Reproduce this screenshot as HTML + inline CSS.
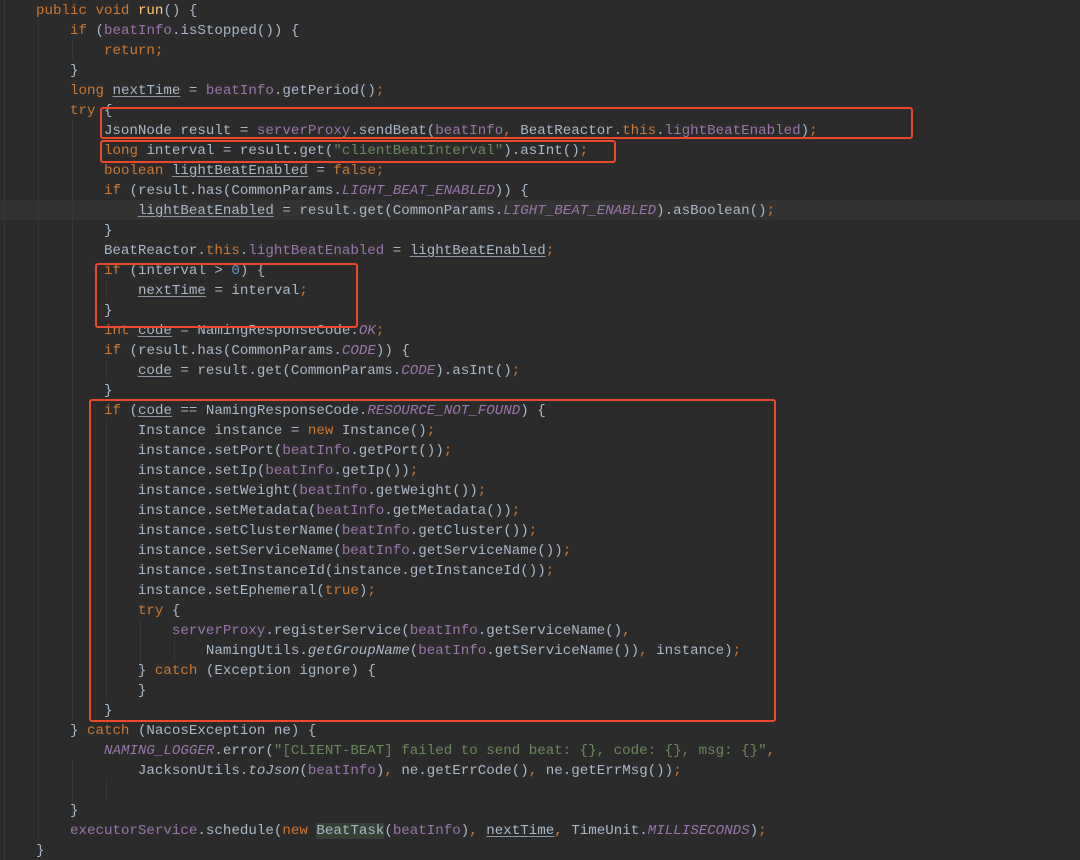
<!DOCTYPE html>
<html><head><meta charset="utf-8"><style>
html,body{margin:0;padding:0;background:#2b2b2b;width:1080px;height:860px;overflow:hidden;position:relative}
pre{position:absolute;left:2px;top:1px;margin:0;font-family:"Liberation Mono",monospace;font-size:14.17px;line-height:20px;color:#a9b7c6;white-space:pre}
.k{color:#cc7832}.f{color:#9876aa}.fi{color:#9876aa;font-style:italic}.s{color:#6a8759}.n{color:#6897bb}.m{color:#ffc66d}.i{font-style:italic}
.u{text-decoration:underline;text-decoration-color:#8a949e;text-underline-offset:2px}
.bt{background:#344134}
.hl{position:absolute;left:0;top:200px;width:1080px;height:20px;background:#323232}
.g{position:absolute;width:1px;background:#373737}
.box{position:absolute;border:2px solid #ea4a2a;border-radius:3px;box-sizing:border-box}
</style></head><body>
<div class="hl"></div>
<div class="g" style="left:4px;top:0;height:860px"></div>
<div class="g" style="left:38px;top:20px;height:820px"></div>
<div class="g" style="left:72px;top:40px;height:20px"></div>
<div class="g" style="left:72px;top:120px;height:600px"></div>
<div class="g" style="left:72px;top:760px;height:60px"></div>
<div class="g" style="left:106px;top:200px;height:20px"></div>
<div class="g" style="left:106px;top:280px;height:20px"></div>
<div class="g" style="left:106px;top:360px;height:20px"></div>
<div class="g" style="left:106px;top:420px;height:280px"></div>
<div class="g" style="left:106px;top:780px;height:20px"></div>
<div class="g" style="left:140px;top:620px;height:60px"></div>
<div class="g" style="left:174px;top:640px;height:20px"></div>
<pre>    <span class="k">public void </span><span class="m">run</span>() {
        <span class="k">if </span>(<span class="f">beatInfo</span>.isStopped()) {
            <span class="k">return;</span>
        }
        <span class="k">long </span><span class="u">nextTime</span> = <span class="f">beatInfo</span>.getPeriod()<span class="k">;</span>
        <span class="k">try </span>{
            JsonNode result = <span class="f">serverProxy</span>.sendBeat(<span class="f">beatInfo</span><span class="k">, </span>BeatReactor.<span class="k">this</span>.<span class="f">lightBeatEnabled</span>)<span class="k">;</span>
            <span class="k">long </span>interval = result.get(<span class="s">"clientBeatInterval"</span>).asInt()<span class="k">;</span>
            <span class="k">boolean </span><span class="u">lightBeatEnabled</span> = <span class="k">false;</span>
            <span class="k">if </span>(result.has(CommonParams.<span class="fi">LIGHT_BEAT_ENABLED</span>)) {
                <span class="u">lightBeatEnabled</span> = result.get(CommonParams.<span class="fi">LIGHT_BEAT_ENABLED</span>).asBoolean()<span class="k">;</span>
            }
            BeatReactor.<span class="k">this</span>.<span class="f">lightBeatEnabled</span> = <span class="u">lightBeatEnabled</span><span class="k">;</span>
            <span class="k">if </span>(interval &gt; <span class="n">0</span>) {
                <span class="u">nextTime</span> = interval<span class="k">;</span>
            }
            <span class="k">int </span><span class="u">code</span> = NamingResponseCode.<span class="fi">OK</span><span class="k">;</span>
            <span class="k">if </span>(result.has(CommonParams.<span class="fi">CODE</span>)) {
                <span class="u">code</span> = result.get(CommonParams.<span class="fi">CODE</span>).asInt()<span class="k">;</span>
            }
            <span class="k">if </span>(<span class="u">code</span> == NamingResponseCode.<span class="fi">RESOURCE_NOT_FOUND</span>) {
                Instance instance = <span class="k">new </span>Instance()<span class="k">;</span>
                instance.setPort(<span class="f">beatInfo</span>.getPort())<span class="k">;</span>
                instance.setIp(<span class="f">beatInfo</span>.getIp())<span class="k">;</span>
                instance.setWeight(<span class="f">beatInfo</span>.getWeight())<span class="k">;</span>
                instance.setMetadata(<span class="f">beatInfo</span>.getMetadata())<span class="k">;</span>
                instance.setClusterName(<span class="f">beatInfo</span>.getCluster())<span class="k">;</span>
                instance.setServiceName(<span class="f">beatInfo</span>.getServiceName())<span class="k">;</span>
                instance.setInstanceId(instance.getInstanceId())<span class="k">;</span>
                instance.setEphemeral(<span class="k">true</span>)<span class="k">;</span>
                <span class="k">try </span>{
                    <span class="f">serverProxy</span>.registerService(<span class="f">beatInfo</span>.getServiceName()<span class="k">,</span>
                        NamingUtils.<span class="i">getGroupName</span>(<span class="f">beatInfo</span>.getServiceName())<span class="k">, </span>instance)<span class="k">;</span>
                } <span class="k">catch </span>(Exception ignore) {
                }
            }
        } <span class="k">catch </span>(NacosException ne) {
            <span class="fi">NAMING_LOGGER</span>.error(<span class="s">"[CLIENT-BEAT] failed to send beat: {}, code: {}, msg: {}"</span><span class="k">,</span>
                JacksonUtils.<span class="i">toJson</span>(<span class="f">beatInfo</span>)<span class="k">, </span>ne.getErrCode()<span class="k">, </span>ne.getErrMsg())<span class="k">;</span>

        }
        <span class="f">executorService</span>.schedule(<span class="k">new </span><span class="bt">BeatTask</span>(<span class="f">beatInfo</span>)<span class="k">, </span><span class="u">nextTime</span><span class="k">, </span>TimeUnit.<span class="fi">MILLISECONDS</span>)<span class="k">;</span>
    }</pre>
<div class="box" style="left:100px;top:107px;width:813px;height:32px"></div>
<div class="box" style="left:100px;top:140px;width:516px;height:23px"></div>
<div class="box" style="left:95px;top:263px;width:263px;height:65px"></div>
<div class="box" style="left:89px;top:399px;width:687px;height:323px"></div>
</body></html>
